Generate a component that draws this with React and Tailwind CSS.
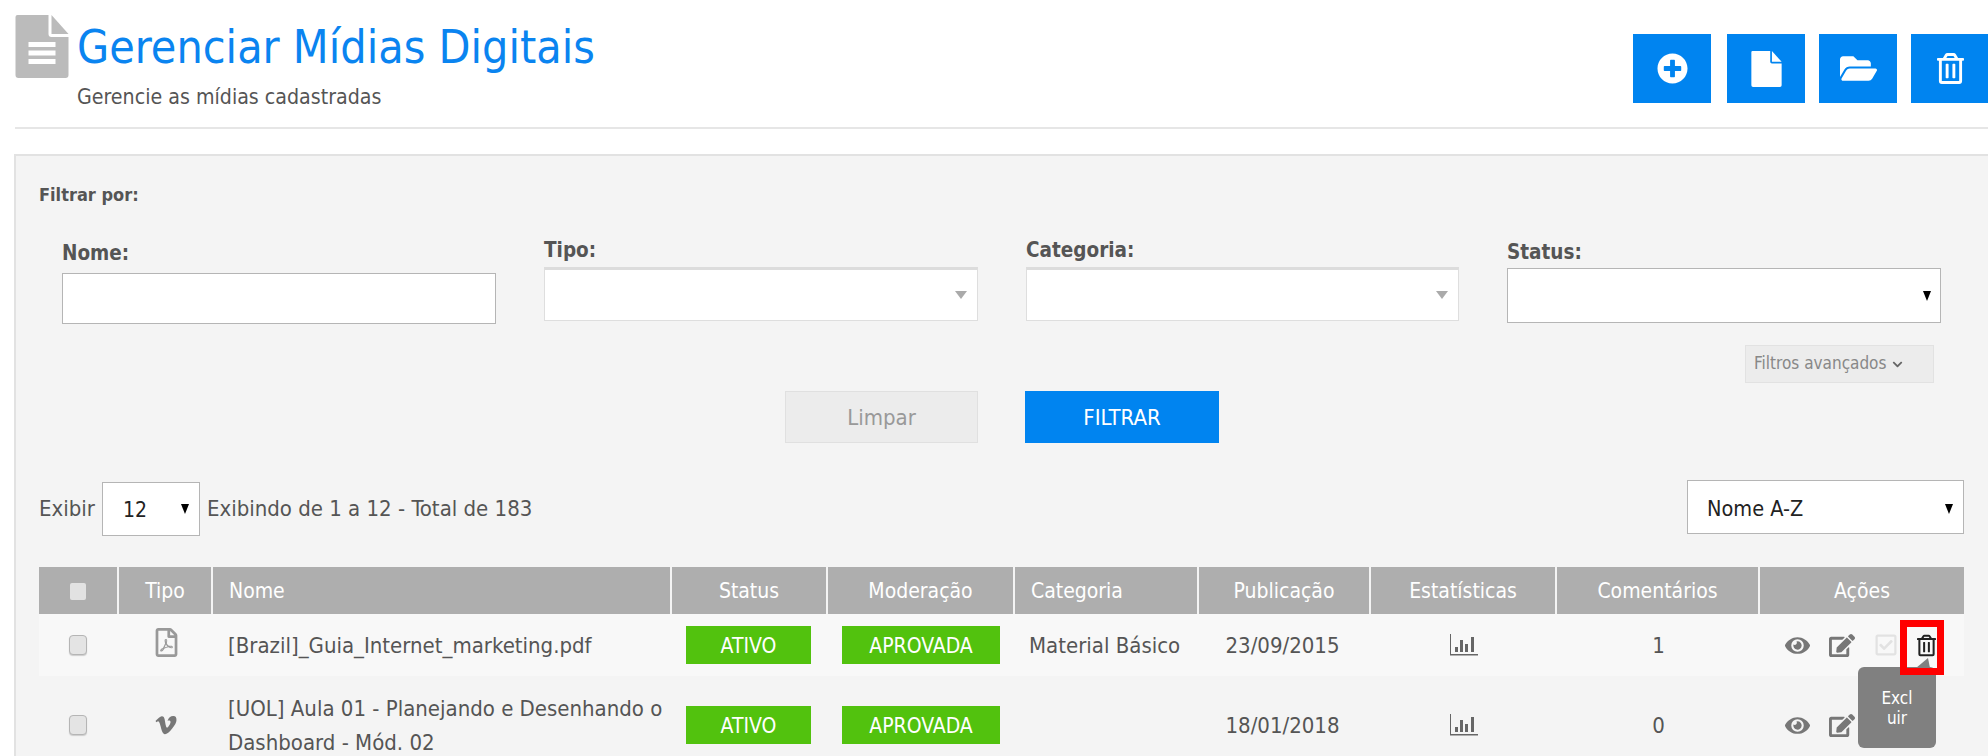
import { FaPlusCircle, FaFolderOpen, FaRegTrashAlt, FaEye, FaEdit, FaRegCheckSquare, FaRegFilePdf, FaVimeoV, FaChevronDown } from "react-icons/fa";

const font = "[font-family:'DejaVu_Sans',sans-serif] [font-stretch:condensed]";

const FileIcon = ({ className, lines }) => (
  <svg viewBox="0 0 53 63" className={className} fill="currentColor">
    <path d="M2 0H33V19a3 3 0 0 0 3 3H53V60a3 3 0 0 1-3 3H3a3 3 0 0 1-3-3V2a2 2 0 0 1 2-2Z" />
    <path d="M36 0 53 19H36Z" />
    {lines && <path d="M13 27H40V32H13ZM13 35.500H40V40.500H13ZM13 44H40V49H13Z" fill="#fff" />}
  </svg>
);

const BarsIcon = ({ className }) => (
  <svg viewBox="0 0 28 22" className={className} fill="currentColor">
    <path d="M0 0H1V20H28V21.500H0Z" />
    <path d="M5 13H8V18H5ZM10 6H13V18H10ZM15 10H18V18H15ZM21 3H24V18H21Z" />
  </svg>
);

const Arrow = ({ className }) => (
  <svg viewBox="0 0 10 14" preserveAspectRatio="none" className={className} fill="currentColor">
    <path d="M0 0H10L5 14Z" />
  </svg>
);

const HeadBtn = ({ children, className = "" }) => (
  <div className={`w-[78px] h-[69px] bg-[#0084f0] text-white flex items-center justify-center ${className}`}>
    {children}
  </div>
);

const Field = ({ label, children, className = "" }) => (
  <div className={`flex flex-col ${className}`}>
    <div className="text-[20.500px] leading-[24px] font-bold text-[#555]">{label}</div>
    {children}
  </div>
);

const Chosen = () => (
  <div className="mt-[5px] h-[54px] bg-white border border-[#dedede] border-t-[3px] border-t-[#dcdcdc] flex items-center justify-end pr-[10px]">
    <Arrow className="w-[12px] h-[8px] text-[#aaa]" />
  </div>
);

const Th = ({ children, className = "" }) => (
  <div className={`bg-[#aeaeae] text-white text-[21px] h-[47px] pt-[2px] flex items-center justify-center ${className}`}>
    {children}
  </div>
);

const Check = () => (
  <div className="w-[18px] h-[20px] rounded-[4px] border border-[#b5b5b5] bg-[#e4e4e4] shadow-[0_1px_1px_#ccc]" />
);

const Badge = ({ children, className = "" }) => (
  <div className={`h-[38px] pt-[3px] bg-[#52c20e] text-white text-[21px] flex items-center justify-center ${className}`}>
    {children}
  </div>
);

const Row = ({ typeIcon, nome, categoria, data, comentarios, className = "", showAll = true }) => (
  <div className={`grid grid-cols-[80px_94px_459px_156px_186px_184px_172px_187px_203px_202px] ${className}`}>
    <div className="flex items-center justify-center pr-[2px]"><Check /></div>
    <div className="flex items-center justify-center text-[#999]">{typeIcon}</div>
    <div className="flex items-center pl-[15px] pr-[4px] pt-[2px] text-[22px] leading-[34px] text-[#555]">{nome}</div>
    <div className="flex items-center pl-[14px]"><Badge className="w-[125px]">ATIVO</Badge></div>
    <div className="flex items-center pl-[14px]"><Badge className="w-[158px]">APROVADA</Badge></div>
    <div className="flex items-center pl-[15px] text-[22px] text-[#555]">{categoria}</div>
    <div className="flex items-center justify-center pr-[3px] text-[22px] text-[#555]">{data}</div>
    <div className="flex items-center justify-center"><BarsIcon className="w-[28px] h-[22px] text-[#666]" /></div>
    <div className="flex items-center justify-center text-[22px] text-[#555]">{comentarios}</div>
    <div className="flex items-center pl-[25px] gap-[19px] text-[#777]">
      <FaEye className="w-[25px] h-[25px]" />
      <FaEdit className="w-[26px] h-[25px]" />
      {showAll && <FaRegCheckSquare className="w-[24px] h-[24px] text-[#e2e2e2]" />}
      {showAll && <FaRegTrashAlt className="w-[19px] h-[23px] text-[#222]" />}
    </div>
  </div>
);

export default function App() {
  return (
    <div className={`relative w-full h-[756px] overflow-hidden bg-white ${font}`}>

      {/* Header */}
      <div className="ml-[15px] h-[129px] border-b-2 border-[#e6e6e6] flex justify-between">
        <div className="flex items-start pt-[15px]">
          <FileIcon lines className="w-[54px] h-[63px] text-[#bbbbbb]" />
          <div className="ml-[8px]">
            <h1 className="text-[46.200px] leading-[50px] mt-[7px] text-[#0a84f0]">Gerenciar Mídias Digitais</h1>
            <p className="text-[21.200px] leading-[24px] mt-[13px] text-[#555]">Gerencie as mídias cadastradas</p>
          </div>
        </div>
        <div className="flex gap-[14px] pt-[34px] -mr-[1px]">
          <HeadBtn className="mr-[2px]"><FaPlusCircle className="w-[31px] h-[31px]" /></HeadBtn>
          <HeadBtn><FileIcon className="w-[31px] h-[36px]" /></HeadBtn>
          <HeadBtn><FaFolderOpen className="w-[37px] h-[33px]" /></HeadBtn>
          <HeadBtn><FaRegTrashAlt className="w-[27px] h-[31px]" /></HeadBtn>
        </div>
      </div>

      {/* Filtros */}
      <div className="mt-[25px] ml-[14px] h-[610px] border-t-2 border-l-2 border-[#e2e2e2] bg-[#f4f4f4]">
        <div className="pl-[23px] pt-[27px] text-[18px] leading-[24px] font-bold text-[#555]">Filtrar por:</div>

        <div className="pl-[46px] mt-[33px] grid grid-cols-[434px_434px_433px_434px] gap-x-[48px]">
          <Field label="Nome:" className="pt-[1px]">
            <div className="mt-[8px] h-[51px] bg-white border border-[#b5b5b5]" />
          </Field>
          <Field label="Tipo:" className="-mt-[2px]"><Chosen /></Field>
          <Field label="Categoria:" className="-mt-[2px]"><Chosen /></Field>
          <Field label="Status:">
            <div className="mt-[4px] h-[55px] bg-white border border-[#b5b5b5] flex items-center justify-end pr-[9px]">
              <Arrow className="w-[8px] h-[10px] text-black" />
            </div>
          </Field>
        </div>

        <div className="flex justify-end pr-[54px] mt-[21px]">
          <div className="w-[189px] h-[38px] bg-[#ececec] border border-[#e2e2e2] flex items-center pl-[8px] gap-[5px] text-[17px] text-[#888]">
            Filtros avançados <FaChevronDown className="w-[13px] h-[11px] text-[#666]" />
          </div>
        </div>

        <div className="pl-[769px] mt-[8px] flex gap-[47px]">
          <div className="w-[193px] h-[52px] bg-[#ececec] border border-[#e0e0e0] flex items-center justify-center text-[22px] text-[#999]">Limpar</div>
          <div className="w-[194px] h-[52px] bg-[#0084f0] flex items-center justify-center text-[22px] text-white">FILTRAR</div>
        </div>

        {/* Exibir + ordenacao */}
        <div className="pl-[23px] pr-[24px] mt-[39px] flex justify-between items-start text-[22px] text-[#555]">
          <div className="flex items-center">
            <span className="-mt-[2px]">Exibir</span>
            <div className="ml-[7px] w-[98px] h-[54px] bg-white border border-[#b5b5b5] flex items-center justify-between pl-[20px] pr-[10px] text-[#222]">
              <span className="text-[21px] pt-[4px]">12</span>
              <Arrow className="w-[8px] h-[10px] text-black" />
            </div>
            <span className="ml-[7px] -mt-[2px]">Exibindo de 1 a 12 - Total de 183</span>
          </div>
          <div className="w-[277px] h-[54px] -mt-[2px] pt-[3px] bg-white border border-[#b5b5b5] flex items-center justify-between pl-[19px] pr-[10px] text-[21.500px] text-[#222]">
            <span className="pt-[2px]">Nome A-Z</span>
            <Arrow className="w-[8px] h-[10px] text-black" />
          </div>
        </div>

        {/* Tabela */}
        <div className="ml-[23px] w-[1925px] mt-[31px]">
          <div className="grid grid-cols-[78px_92px_457px_154px_185px_182px_170px_184px_201px_204px] gap-x-[2px] w-[1924px]">
            <Th><span className="block w-[16px] h-[17px] rounded-[2px] bg-[#e2e2e2]" /></Th>
            <Th>Tipo</Th>
            <Th className="justify-start pl-[16px]">Nome</Th>
            <Th>Status</Th>
            <Th>Moderação</Th>
            <Th className="justify-start pl-[16px]">Categoria</Th>
            <Th>Publicação</Th>
            <Th>Estatísticas</Th>
            <Th>Comentários</Th>
            <Th>Ações</Th>
          </div>
          <Row
            className="h-[62px] bg-[#f8f8f8]"
            typeIcon={<FaRegFilePdf className="w-[25px] h-[29px] -mt-[6px]" />}
            nome="[Brazil]_Guia_Internet_marketing.pdf"
            categoria="Material Básico"
            data="23/09/2015"
            comentarios="1"
          />
          <Row
            className="h-[98px]"
            typeIcon={<FaVimeoV className="w-[26px] h-[24px] text-[#777]" />}
            nome="[UOL] Aula 01 - Planejando e Desenhando o Dashboard - Mód. 02"
            categoria=""
            data="18/01/2018"
            comentarios="0"
            showAll={false}
          />
        </div>
      </div>

      {/* Destaque + tooltip */}
      <div className="absolute left-[1900px] top-[620px] w-[44px] h-[55px] border-[7px] border-[#ff0000] z-20" />
      <div className="absolute left-[1858px] top-[667px] w-[78px] h-[81px] rounded-[6px] bg-[#808080] z-10 flex items-center justify-center text-center text-white text-[17px] leading-[20px] font-medium">
        Excl<br />uir
      </div>
      <div className="absolute left-[1916px] top-[658px] w-0 h-0 border-l-[12px] border-l-transparent border-b-[10px] border-b-[#808080] border-r-[2px] border-r-transparent z-10" />
    </div>
  );
}
